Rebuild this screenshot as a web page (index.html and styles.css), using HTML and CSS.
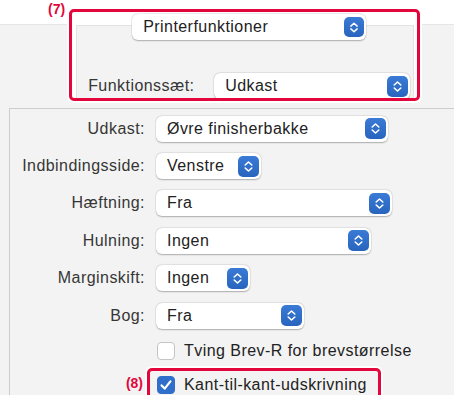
FILE: index.html
```html
<!DOCTYPE html>
<html lang="da">
<head>
    <meta charset="UTF-8">
    <meta name="viewport" content="width=device-width, initial-scale=1.0">
    <title>Printerfunktioner</title>
    <link rel="stylesheet" href="styles.css">
</head>
<body>
    <!-- Top: feature set chooser (7) -->
    <div class="header">
        <span class="callout">(7)</span>
        <div class="frame">
            <div class="frame-body">
                <div class="popup popup-printer">
                    <span>Printerfunktioner</span>
                    <span class="stepper"><svg width="21" height="21" viewBox="0 0 21 21"><path d="M7.2 9 L10.5 6 L13.8 9 M7.2 12 L10.5 15 L13.8 12"/></svg></span>
                </div>
                <div class="feature-row">
                    <span class="label">Funktionssæt:</span>
                    <div class="popup popup-feature">
                        <span>Udkast</span>
                        <span class="stepper"><svg width="21" height="21" viewBox="0 0 21 21"><path d="M7.2 9 L10.5 6 L13.8 9 M7.2 12 L10.5 15 L13.8 12"/></svg></span>
                    </div>
                </div>
            </div>
        </div>
    </div>

    <!-- Options panel -->
    <div class="sheet">
        <div class="panel">
            <span class="label">Udkast:</span>
            <div class="popup popup-udkast">
                <span>Øvre finisherbakke</span>
                <span class="stepper"><svg width="21" height="21" viewBox="0 0 21 21"><path d="M7.2 9 L10.5 6 L13.8 9 M7.2 12 L10.5 15 L13.8 12"/></svg></span>
            </div>

            <span class="label">Indbindingsside:</span>
            <div class="popup popup-binding">
                <span>Venstre</span>
                <span class="stepper"><svg width="21" height="21" viewBox="0 0 21 21"><path d="M7.2 9 L10.5 6 L13.8 9 M7.2 12 L10.5 15 L13.8 12"/></svg></span>
            </div>

            <span class="label">Hæftning:</span>
            <div class="popup popup-staple">
                <span>Fra</span>
                <span class="stepper"><svg width="21" height="21" viewBox="0 0 21 21"><path d="M7.2 9 L10.5 6 L13.8 9 M7.2 12 L10.5 15 L13.8 12"/></svg></span>
            </div>

            <span class="label">Hulning:</span>
            <div class="popup popup-punch">
                <span>Ingen</span>
                <span class="stepper"><svg width="21" height="21" viewBox="0 0 21 21"><path d="M7.2 9 L10.5 6 L13.8 9 M7.2 12 L10.5 15 L13.8 12"/></svg></span>
            </div>

            <span class="label">Marginskift:</span>
            <div class="popup popup-margin">
                <span>Ingen</span>
                <span class="stepper"><svg width="21" height="21" viewBox="0 0 21 21"><path d="M7.2 9 L10.5 6 L13.8 9 M7.2 12 L10.5 15 L13.8 12"/></svg></span>
            </div>

            <span class="label">Bog:</span>
            <div class="popup popup-book">
                <span>Fra</span>
                <span class="stepper"><svg width="21" height="21" viewBox="0 0 21 21"><path d="M7.2 9 L10.5 6 L13.8 9 M7.2 12 L10.5 15 L13.8 12"/></svg></span>
            </div>

            <span></span>
            <label class="check">
                <span class="box"></span>
                <span>Tving Brev-R for brevstørrelse</span>
            </label>

            <span class="label callout-cell"><span class="callout">(8)</span></span>
            <div class="highlight">
                <label class="check">
                    <span class="box checked"><svg width="18" height="18" viewBox="0 0 18 18"><path d="M4.6 9.4 L7.7 12.6 L13.4 5.4"/></svg></span>
                    <span>Kant-til-kant-udskrivning</span>
                </label>
            </div>
        </div>
    </div>
</body>
</html>
```

FILE: styles.css
```css
:root {
    --sheet-gray: #f3f3f3;
    --line-color: #cdcdcd;
    --mark-red: #e2063c;
    --text-color: #222;
    --label-color: #363636;
    --blue: #2f6fcb;
}

body {
    margin: 0;
    background-color: #fff;
    font-family: "Liberation Sans", Arial, sans-serif;
    font-size: 16px;
    letter-spacing: 0.45px;
    color: var(--text-color);
}

/* 顶部区域 */
.header {
    height: 108px;
    display: flex;
    align-items: flex-start;
    background: linear-gradient(#fff 0 24px, #e6e6e6 24px 25px, var(--sheet-gray) 25px);
}

.callout {
    color: var(--mark-red);
    font-weight: bold;
    font-size: 14px;
    line-height: 14px;
    letter-spacing: 0;
}

.header > .callout {
    margin: 2px 0 0 48px;
}

.frame {
    box-sizing: border-box;
    width: 351px;
    height: 92px;
    margin: 9px 0 0 4px;
    border: 3px solid var(--mark-red);
    border-radius: 5px;
    background-color: #fff;
    box-shadow: 0 0 0 2px #fff;
    display: flex;
    overflow: hidden;
}

.frame-body {
    flex: 1;
    margin: 13px 3px 0 4px;
    background-color: var(--sheet-gray);
    border: 1px solid #e3e3e3;
    border-bottom: none;
    display: flex;
    flex-direction: column;
}

.popup-printer {
    margin: -12px 0 0 55px;
    width: 234px;
    height: 23px;
}

.feature-row {
    margin-top: auto;
    margin-bottom: -1px;
    padding-left: 11px;
    display: flex;
    align-items: center;
    gap: 11px;
}

.feature-row .label {
    width: 115px;
    color: var(--label-color);
}

.popup-feature {
    width: 196px;
}

/* 弹出菜单 */
.popup {
    box-sizing: border-box;
    height: 26px;
    padding: 0 2px 0 11px;
    display: flex;
    align-items: center;
    justify-content: space-between;
    background-color: #fff;
    border-radius: 6px;
    box-shadow: 0 0.5px 1.5px rgba(0, 0, 0, 0.28), 0 0 0 0.5px rgba(0, 0, 0, 0.05);
}

.stepper {
    width: 21px;
    height: 21px;
    border-radius: 5px;
    background: linear-gradient(#3a7bd6, #2864bd);
    display: flex;
}

.stepper path {
    fill: none;
    stroke: #fff;
    stroke-width: 1.6;
    stroke-linecap: round;
    stroke-linejoin: round;
}

.popup-printer .stepper {
    width: 20px;
    height: 20px;
}

/* 选项面板 */
.sheet {
    background-color: var(--sheet-gray);
    padding-left: 9px;
    height: 287px;
}

.panel {
    box-sizing: border-box;
    height: 287px;
    border-left: 1px solid var(--line-color);
    border-top: 1px solid var(--line-color);
    padding-top: 1px;
    display: grid;
    grid-template-columns: 135px max-content;
    grid-template-rows: repeat(6, 37.4px) 34px 30px;
    column-gap: 11px;
    align-items: center;
}

.panel .label {
    text-align: right;
    color: var(--label-color);
}

.popup-udkast { width: 232px; }
.popup-binding { width: 105px; }
.popup-staple { width: 236px; }
.popup-punch { width: 215px; }
.popup-margin { width: 94px; }
.popup-book { width: 148px; }

.check {
    display: flex;
    align-items: center;
    gap: 9px;
    margin-left: 1px;
}

.box {
    box-sizing: border-box;
    width: 18px;
    height: 18px;
    border-radius: 4px;
    background-color: #fff;
    border: 1px solid #c4c4c4;
    display: flex;
}

.box.checked {
    background-color: var(--blue);
    border-color: var(--blue);
}

.box.checked svg {
    margin: -1px;
}

.box path {
    fill: none;
    stroke: #fff;
    stroke-width: 2.2;
    stroke-linecap: round;
    stroke-linejoin: round;
}

.callout-cell {
    padding-right: 2px;
}

.highlight {
    box-sizing: border-box;
    width: 234px;
    height: 34px;
    margin: 3px 0 0 -9px;
    padding-left: 6px;
    border: 3px solid var(--mark-red);
    border-radius: 5px;
    box-shadow: 0 0 0 2px #fff;
    display: flex;
    align-items: center;
}
```
